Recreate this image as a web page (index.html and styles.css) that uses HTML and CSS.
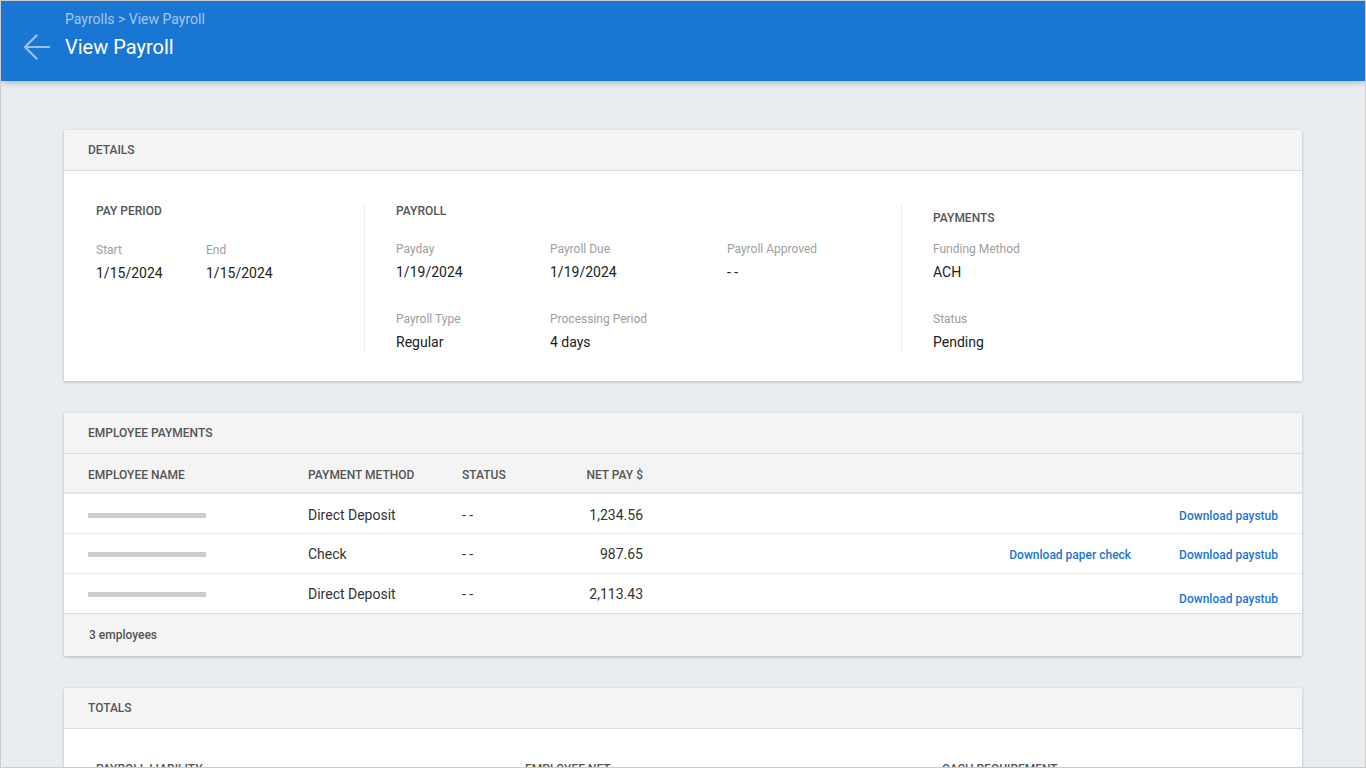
FILE: index.html
```html
<!DOCTYPE html>
<html lang="en">
<head>
<meta charset="utf-8">
<title>View Payroll</title>
<link rel="stylesheet" href="styles.css">
</head>
<body>
<div class="frame">
  <header class="topbar">
    <div class="back">
      <svg width="36" height="36" viewBox="0 0 36 36" aria-hidden="true">
        <path d="M31 18H7.5M18.5 6.5L7 18l11.5 11.5" fill="none" stroke="currentColor" stroke-width="2.2" stroke-linecap="square" stroke-linejoin="miter"/>
      </svg>
    </div>
    <div class="titles">
      <div class="crumbs">Payrolls &gt; View Payroll</div>
      <h1 class="title">View Payroll</h1>
    </div>
  </header>

  <main class="main">
    <section class="card">
      <div class="card-head">Details</div>
      <div class="details">
        <div class="dcol dcol-period">
          <div class="dtitle">Pay Period</div>
          <div class="fgrid fgrid-period">
            <div class="field"><span class="flabel">Start</span><span class="fvalue">1/15/2024</span></div>
            <div class="field"><span class="flabel">End</span><span class="fvalue">1/15/2024</span></div>
          </div>
        </div>
        <div class="dcol dcol-payroll">
          <div class="dtitle dtitle-payroll">Payroll</div>
          <div class="fgrid fgrid-payroll">
            <div class="field"><span class="flabel">Payday</span><span class="fvalue">1/19/2024</span></div>
            <div class="field"><span class="flabel">Payroll Due</span><span class="fvalue">1/19/2024</span></div>
            <div class="field"><span class="flabel">Payroll Approved</span><span class="fvalue">- -</span></div>
            <div class="field"><span class="flabel">Payroll Type</span><span class="fvalue">Regular</span></div>
            <div class="field"><span class="flabel">Processing Period</span><span class="fvalue">4 days</span></div>
          </div>
        </div>
        <div class="dcol dcol-payments">
          <div class="dtitle dtitle-payments">Payments</div>
          <div class="fgrid fgrid-payments">
            <div class="field"><span class="flabel">Funding Method</span><span class="fvalue">ACH</span></div>
            <div class="field"><span class="flabel">Status</span><span class="fvalue">Pending</span></div>
          </div>
        </div>
      </div>
    </section>

    <section class="card">
      <div class="card-head">Employee Payments</div>
      <div class="trow thead">
        <div>Employee Name</div>
        <div>Payment Method</div>
        <div>Status</div>
        <div class="num">Net Pay $</div>
        <div></div>
        <div></div>
      </div>
      <div class="trow tbody tfirst">
        <div><span class="namebar"></span></div>
        <div>Direct Deposit</div>
        <div>- -</div>
        <div class="num">1,234.56</div>
        <div></div>
        <div><a class="link" href="#">Download paystub</a></div>
      </div>
      <div class="trow tbody">
        <div><span class="namebar"></span></div>
        <div>Check</div>
        <div>- -</div>
        <div class="num">987.65</div>
        <div class="checkcell"><a class="link" href="#">Download paper check</a></div>
        <div><a class="link" href="#">Download paystub</a></div>
      </div>
      <div class="trow tbody tlast">
        <div><span class="namebar"></span></div>
        <div>Direct Deposit</div>
        <div>- -</div>
        <div class="num">2,113.43</div>
        <div></div>
        <div><a class="link link-low" href="#">Download paystub</a></div>
      </div>
      <div class="tfoot">3 employees</div>
    </section>

    <section class="card">
      <div class="card-head">Totals</div>
      <div class="totals">
        <div class="ttitle">Payroll Liability</div>
        <div class="ttitle">Employee Net</div>
        <div class="ttitle">Cash Requirement</div>
      </div>
    </section>
  </main>
</div>
</body>
</html>
```

FILE: styles.css
```css
* { box-sizing: border-box; }

html, body {
  margin: 0;
  padding: 0;
}

body {
  font-family: Roboto, "Noto Sans", "Liberation Sans", Arial, sans-serif;
  color: #212121;
  background: #e9edf0;
}

.frame {
  width: 1366px;
  height: 768px;
  border: 1px solid #cbcbcb;
  background: #e9edf0;
  overflow: hidden;
}

/* ---------- Top bar ---------- */
.topbar {
  height: 80px;
  background: #1976d2;
  display: flex;
  box-shadow: 0 2px 6px rgba(0, 0, 0, 0.22);
  position: relative;
  z-index: 1;
}

.back {
  width: 64px;
  padding: 28px 0 0 17px;
  color: rgba(255, 255, 255, 0.55);
}

.back svg { display: block; }

.titles {
  padding-top: 8px;
}

.crumbs {
  font-size: 14px;
  line-height: 20px;
  color: rgba(255, 255, 255, 0.6);
}

.title {
  margin: 4px 0 0;
  font-size: 20px;
  line-height: 28px;
  font-weight: 400;
  color: #fff;
}

/* ---------- Main ---------- */
.main {
  padding: 49px 63px 0;
  display: flex;
  flex-direction: column;
  gap: 32px;
}

.card {
  background: #fff;
  box-shadow: 0 1px 3px rgba(0, 0, 0, 0.22);
}

.card-head {
  height: 41px;
  line-height: 40px;
  padding-left: 24px;
  background: #f4f4f4;
  border-bottom: 1px solid #dcdcdc;
  font-size: 12px;
  font-weight: 500;
  text-transform: uppercase;
  color: #555;
}

/* ---------- Details ---------- */
.details {
  display: flex;
  padding: 33px 32px 29px;
}

.dcol-period { width: 268px; }

.dcol-payroll {
  width: 537px;
  border-left: 1px solid #ececec;
  padding-left: 31px;
}

.dcol-payments {
  flex: 1;
  border-left: 1px solid #ececec;
  padding-left: 31px;
}

.dtitle {
  font-size: 12px;
  line-height: 14px;
  font-weight: 500;
  text-transform: uppercase;
  color: #555;
  margin-top: 0;
  margin-bottom: 24px;
}

.dtitle-payroll { margin-bottom: 23px; }

.dtitle-payments {
  margin-top: 7px;
  margin-bottom: 16px;
}

.fgrid {
  display: grid;
  row-gap: 29px;
}

.fgrid-period { grid-template-columns: 110px 110px; }
.fgrid-payroll { grid-template-columns: 154px 177px 1fr; }
.fgrid-payments { grid-template-columns: 1fr; }

.field {
  display: flex;
  flex-direction: column;
}

.flabel {
  font-size: 12px;
  line-height: 16px;
  color: #9e9e9e;
}

.fvalue {
  margin-top: 5px;
  font-size: 14px;
  line-height: 20px;
  color: #212121;
}

/* ---------- Employee payments table ---------- */
.trow {
  display: grid;
  grid-template-columns: 220px 154px 90px 91px 1fr auto;
  align-items: center;
  padding: 0 24px;
}

.thead {
  height: 40px;
  padding-top: 4px;
  background: #f4f4f4;
  border-bottom: 2px solid #e2e2e2;
  font-size: 12px;
  font-weight: 500;
  text-transform: uppercase;
  color: #555;
}

.tbody {
  height: 40px;
  border-bottom: 1px solid #ebebeb;
  font-size: 14px;
  color: #333;
}

.tfirst > div {
  position: relative;
  top: 1px;
}

.tlast {
  border-bottom: 1px solid #dcdcdc;
}

.num { text-align: right; }

.namebar {
  display: block;
  width: 118px;
  height: 5px;
  background: #cdcdcd;
  margin-top: 2px;
}

.checkcell {
  text-align: right;
  padding-right: 48px;
}

.link {
  font-size: 12px;
  font-weight: 500;
  color: #1976d2;
  text-decoration: none;
}

.link-low {
  position: relative;
  top: 4px;
}

.tfoot {
  height: 42px;
  line-height: 42px;
  padding-left: 25px;
  background: #f4f4f4;
  font-size: 12px;
  font-weight: 500;
  color: #555;
}

/* ---------- Totals ---------- */
.totals {
  display: grid;
  grid-template-columns: 429px 417px 1fr;
  padding: 32px 32px 40px;
}

.ttitle {
  font-size: 12px;
  line-height: 16px;
  font-weight: 500;
  text-transform: uppercase;
  color: #555;
}
```
